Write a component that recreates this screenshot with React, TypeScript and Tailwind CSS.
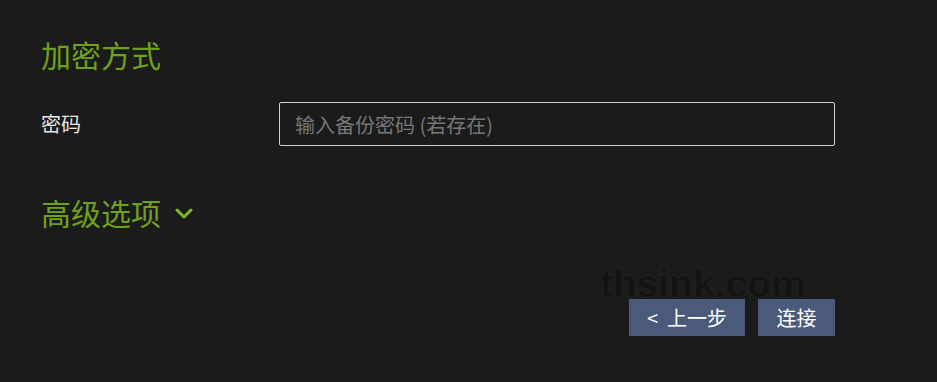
import React from "react";

export default function App() {
  const font = { fontFamily: '"Noto Sans CJK SC", "Noto Sans", sans-serif' };
  return (
    <div className="relative w-[937px] h-[382px] bg-[#1b1b1b] overflow-hidden" style={font}>
      <div className="pl-[41px] pr-[102px] pt-[34px] flex flex-col">
        <h2 className="text-[30px] leading-[40px] text-[#6ea11d] font-normal">加密方式</h2>
        <div className="mt-[28px] flex items-center">
          <label className="w-[238px] text-[20px] text-[#e6e6e6]">密码</label>
          <input
            className="flex-1 h-[44px] bg-transparent border border-[#cfcfcf] rounded-[2px] px-[15px] text-[20px] text-[#ddd] placeholder:text-[#777] outline-none"
            placeholder="输入备份密码 (若存在)"
          />
        </div>
        <div className="mt-[46px] flex items-center gap-[14px]">
          <h2 className="text-[30px] leading-[40px] text-[#6ea11d] font-normal">高级选项</h2>
          <svg width="18" height="14" viewBox="0 0 18 14" className="mt-[2px]">
            <path d="M2 4 L9 11 L16 4" fill="none" stroke="#7fb52a" strokeWidth="3" strokeLinecap="round" strokeLinejoin="round" />
          </svg>
        </div>
        <div className="mt-[67px] flex justify-end gap-[13px]">
          <button className="w-[116px] h-[37px] bg-[#4b5a7b] text-white text-[20px] leading-none flex items-center justify-center">
            <span className="mr-[9px]">&lt;</span>上一步
          </button>
          <button className="w-[77px] h-[37px] bg-[#4b5a7b] text-white text-[20px] leading-none flex items-center justify-center">连接</button>
        </div>
      </div>
      <div
        className="absolute left-[600px] top-[264px] text-[39px] leading-none font-bold text-[#141414] [-webkit-text-stroke:2px_#222222] [paint-order:stroke_fill] pointer-events-none"
        style={{ fontFamily: '"Liberation Sans", Arial, sans-serif' }}
      >
        thsink.com
      </div>
    </div>
  );
}
